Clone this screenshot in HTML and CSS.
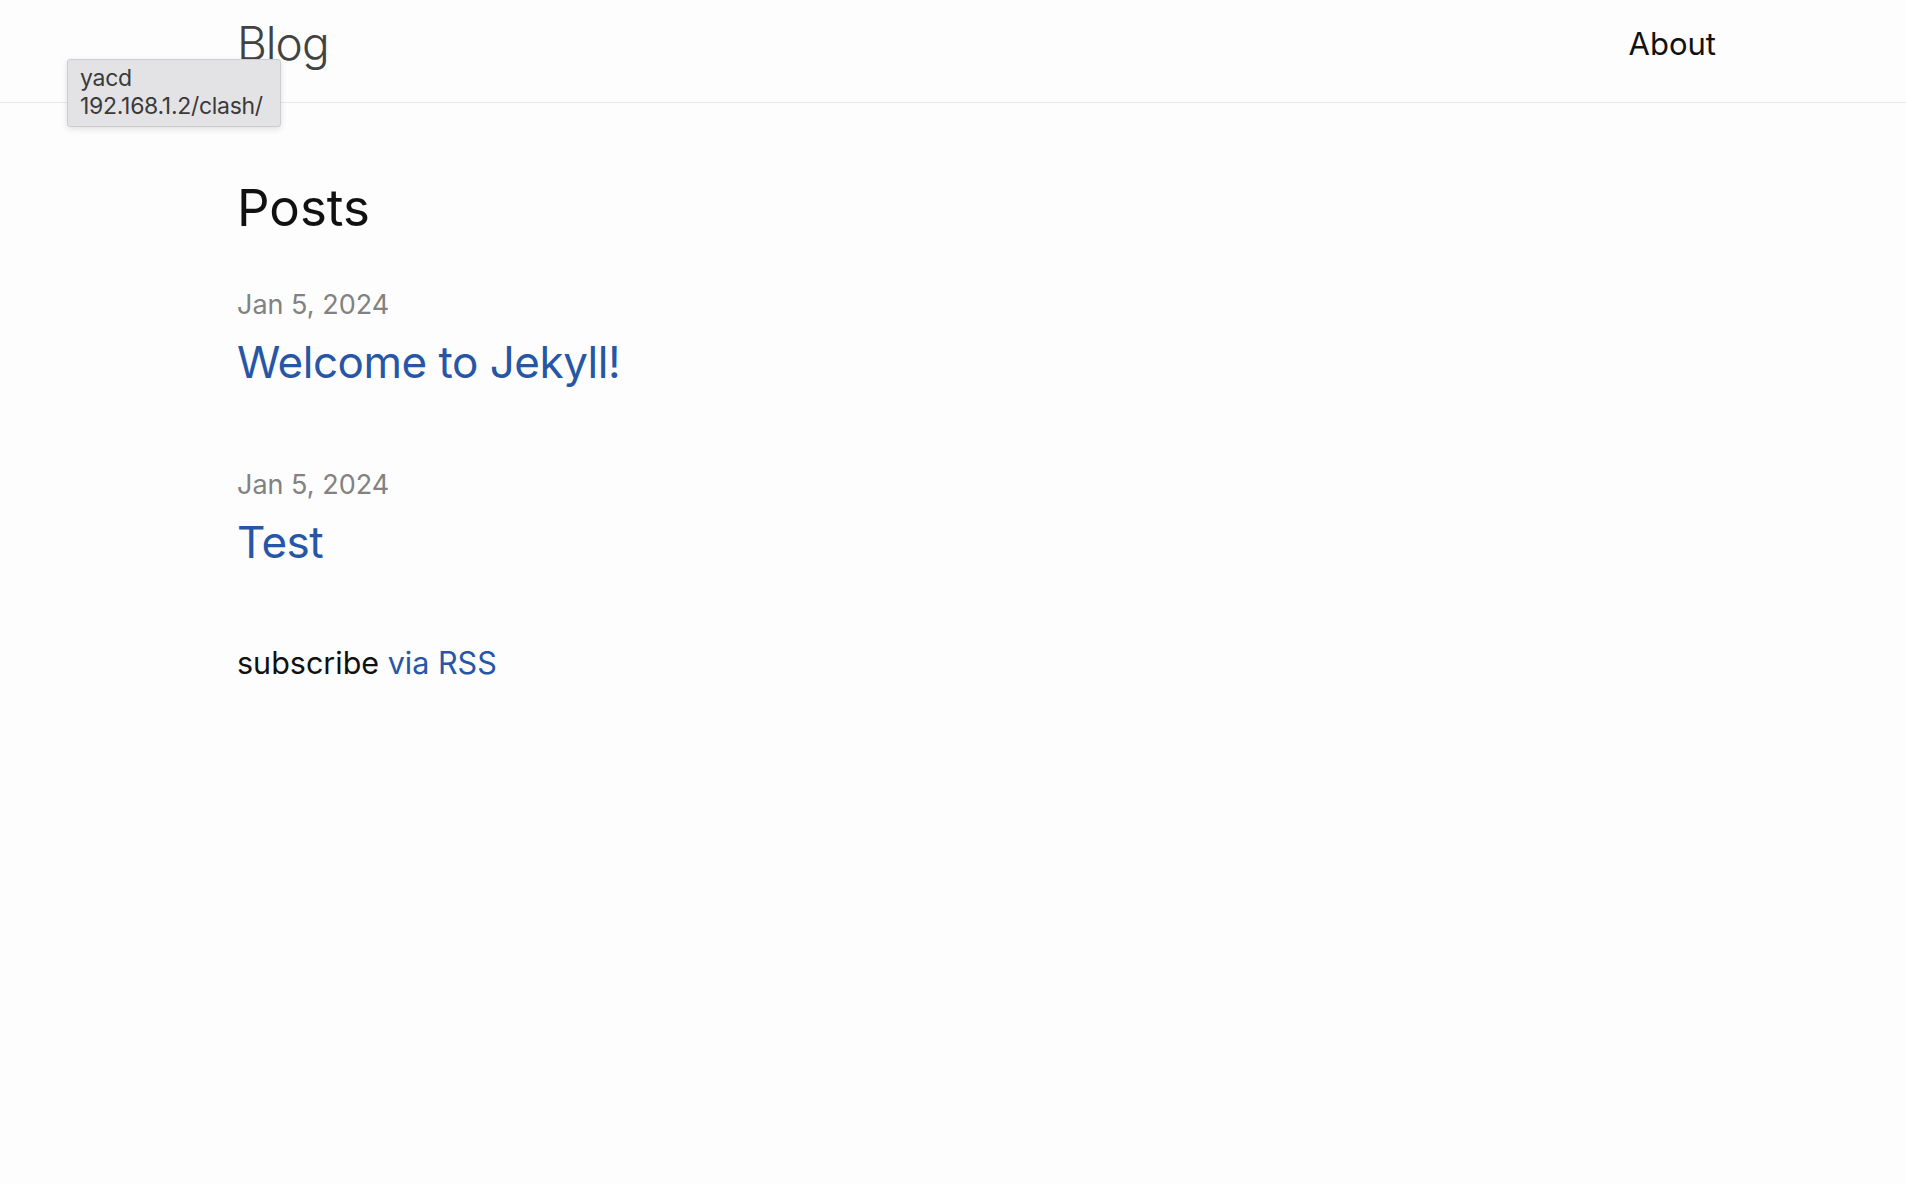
FILE: index.html
```html
<!DOCTYPE html>
<html lang="en">
<head>
<meta charset="utf-8">
<title>Blog</title>
<link rel="stylesheet" href="styles.css">
</head>
<body>
<header class="site-header">
  <div class="wrapper header-row">
    <a class="site-title" href="#">Blog</a>
    <nav class="site-nav"><a class="page-link" href="#">About</a></nav>
  </div>
</header>
<main class="page-content">
  <div class="wrapper">
    <h2 class="post-list-heading">Posts</h2>
    <ul class="post-list">
      <li class="post-item">
        <span class="post-meta">Jan 5, 2024</span>
        <h3 class="post-title"><a class="post-link" href="#">Welcome to Jekyll!</a></h3>
      </li>
      <li class="post-item">
        <span class="post-meta">Jan 5, 2024</span>
        <h3 class="post-title"><a class="post-link" href="#">Test</a></h3>
      </li>
    </ul>
    <p class="rss-subscribe">subscribe <a href="#">via RSS</a></p>
  </div>
</main>
<div class="tooltip">
  <div class="tooltip-line">yacd</div>
  <div class="tooltip-line">192.168.1.2/clash/</div>
</div>
</body>
</html>
```
FILE: styles.css
```css
html, body {
  margin: 0;
  padding: 0;
}
body {
  background: #fdfdfd;
  color: #111111;
  font-family: Inter, "Noto Sans", sans-serif;
  font-weight: 400;
}
a {
  text-decoration: none;
}
.wrapper {
  margin-left: 237px;
  width: 1479px;
}
.site-header {
  height: 102px;
  border-bottom: 1px solid #e8e8e8;
}
.header-row {
  display: flex;
  justify-content: space-between;
  align-items: flex-start;
}
.site-title {
  font-size: 46px;
  font-weight: 300;
  letter-spacing: -1px;
  line-height: 86px;
  color: #424242;
}
.page-link {
  font-size: 31px;
  line-height: 88px;
  color: #111111;
}
.page-content {
  padding-top: 75px;
}
.post-list-heading {
  margin: 0;
  font-size: 51px;
  font-weight: 400;
  line-height: 60px;
  color: #111111;
}
.post-list {
  list-style: none;
  margin: 47px 0 0 0;
  padding: 0;
  display: flex;
  flex-direction: column;
  gap: 76px;
}
.post-item {
  display: flex;
  flex-direction: column;
  gap: 10px;
}
.post-meta {
  font-size: 27px;
  line-height: 40px;
  color: #828282;
}
.post-title {
  margin: 0;
  font-size: 44px;
  font-weight: 400;
  letter-spacing: -0.5px;
  line-height: 54px;
}
.post-link {
  color: #2756a6;
}
.rss-subscribe {
  margin: 71px 0 0 0;
  font-size: 30.5px;
  line-height: 45px;
  color: #111111;
}
.rss-subscribe a {
  color: #2756a6;
}
.tooltip {
  position: absolute;
  left: 67px;
  top: 59px;
  width: 212px;
  height: 62px;
  padding-top: 4px;
  box-sizing: content-box;
  background: #e3e3e6;
  border: 1px solid #cdcdd0;
  border-radius: 3px;
  box-shadow: 0 2px 6px rgba(0, 0, 0, 0.12);
}
.tooltip-line {
  font-size: 23px;
  letter-spacing: -0.3px;
  line-height: 28px;
  color: #3a3a3a;
  padding-left: 12px;
}
```
